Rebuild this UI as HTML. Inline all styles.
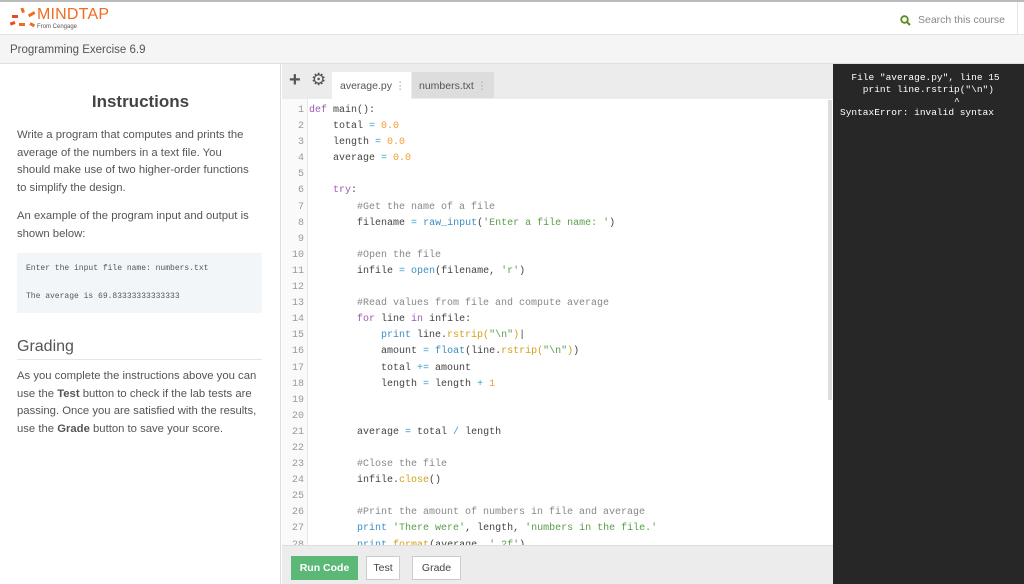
<!DOCTYPE html>
<html><head><meta charset="utf-8"><style>
*{margin:0;padding:0;box-sizing:border-box}
body{width:1024px;height:584px;overflow:hidden;font-family:"Liberation Sans",sans-serif;background:#fff;position:relative}
.top{position:absolute;left:0;top:0;width:1024px;height:35px;border-top:2px solid #bbb;border-bottom:1px solid #e4e4e4;background:#fff}
.crumb{position:absolute;left:0;top:35px;width:1024px;height:29px;background:#f5f5f5;border-bottom:1px solid #e0e0e0;font-size:11.5px;color:#555;padding:9px 0 0 10px}
.left{position:absolute;left:0;top:64px;width:281px;height:520px;background:#fff;border-right:1px solid #ddd;color:#555;font-size:11.3px;line-height:17.6px}
.ed{position:absolute;left:282px;top:64px;width:551px;height:520px;background:#fff;overflow:hidden}
.tabs{position:absolute;left:0;top:0;width:551px;height:35px;background:#ececec}
.gut{position:absolute;left:0;top:35px;width:26px;height:446px;background:#fafafa;border-right:1px solid #e8e8e8}
.code{position:absolute;left:0;top:39px;font-family:"Liberation Mono",monospace;font-size:10px;line-height:16.1px;color:#444;white-space:pre}
.ln{display:inline-block;width:22px;text-align:right;color:#999;margin-right:5px}
.k{color:#9b59b6}.p{color:#3c8dc5}.n{color:#f39c32}.s{color:#5a9e4a}.m{color:#d4a017}.c{color:#888}.o{color:#3aa0c8}
.bot{position:absolute;left:0;top:481px;width:551px;height:39px;background:#ececec;border-top:1px solid #ddd}
.btn{position:absolute;top:10px;height:24px;font-size:10.5px;line-height:22px;text-align:center;border:1px solid #ccc;background:#fff;color:#444}
.out{position:absolute;left:833px;top:64px;width:191px;height:520px;background:#272727;color:#fff;font-family:"Liberation Mono",monospace;font-size:9.5px;line-height:11.8px;white-space:pre;padding:8px 0 0 7px}
</style></head><body>
<div class="top">
<svg style="position:absolute;left:10px;top:6px" width="28" height="22" viewBox="0 0 28 22"><rect x="11" y="0" width="3" height="5" fill="#f26b22" transform="rotate(-20 12 2)"/><rect x="18" y="5" width="7" height="3" fill="#f26b22" transform="rotate(-30 21 6)"/><rect x="2" y="7" width="6" height="3" fill="#e84c1e"/><rect x="0" y="14" width="5" height="3" fill="#e84c1e" transform="rotate(-20 2 15)"/><rect x="9" y="15" width="6" height="3" fill="#f26b22"/><rect x="20" y="15" width="5" height="3" fill="#f26b22" transform="rotate(30 22 16)"/></svg>
<div style="position:absolute;left:37px;top:4px;font-size:16px;color:#f26b22;letter-spacing:0.2px">MINDTAP</div>
<div style="position:absolute;left:37px;top:22px;font-size:6px;color:#555">From Cengage</div>
<svg style="position:absolute;left:900px;top:13px" width="11" height="11" viewBox="0 0 11 11"><circle cx="4.5" cy="4.5" r="3.3" fill="none" stroke="#5c8a1e" stroke-width="1.8"/><line x1="7" y1="7" x2="10" y2="10" stroke="#5c8a1e" stroke-width="2"/></svg>
<div style="position:absolute;left:918px;top:12px;font-size:10.5px;color:#888">Search this course</div>
<div style="position:absolute;left:1017px;top:0;width:1px;height:33px;background:#e4e4e4"></div>
</div>
<div class="crumb">Programming Exercise 6.9</div>
<div class="left">
<div style="position:absolute;left:0;width:281px;top:29px;text-align:center;font-size:17px;font-weight:bold;color:#444">Instructions</div>
<div style="position:absolute;left:17px;top:63px;width:260px;white-space:nowrap">Write a program that computes and prints the<br>average of the numbers in a text file. You<br>should make use of two higher-order functions<br>to simplify the design.</div>
<div style="position:absolute;left:17px;top:144px;width:260px;white-space:nowrap">An example of the program input and output is<br>shown below:</div>
<div style="position:absolute;left:17px;top:189px;width:245px;height:60px;background:#f3f6f9;font-family:'Liberation Mono',monospace;font-size:8px;color:#555;line-height:28px;padding:2px 0 0 9px">Enter the input file name: numbers.txt<br>The average is 69.83333333333333</div>
<div style="position:absolute;left:17px;top:274px;width:245px;font-size:16px;color:#555;border-bottom:1px solid #e5e5e5;padding-bottom:3px">Grading</div>
<div style="position:absolute;left:17px;top:304px;width:260px;white-space:nowrap">As you complete the instructions above you can<br>use the <b>Test</b> button to check if the lab tests are<br>passing. Once you are satisfied with the results,<br>use the <b>Grade</b> button to save your score.</div>
</div>
<div class="ed">
<div class="tabs">
<div style="position:absolute;left:7px;top:5px;font-size:20px;font-weight:bold;color:#555">+</div>
<div style="position:absolute;left:29px;top:6px;font-size:17px;color:#555">⚙</div>
<div style="position:absolute;left:50px;top:8px;width:79px;height:27px;background:#fff;font-size:10.5px;color:#555;padding:8px 0 0 8px">average.py <span style="color:#aaa">⋮</span></div>
<div style="position:absolute;left:130px;top:8px;width:82px;height:26px;background:#ddd;font-size:10.5px;color:#555;padding:8px 0 0 7px">numbers.txt <span style="color:#aaa">⋮</span></div>
</div>
<div class="gut"></div>
<div style="position:absolute;left:546px;top:36px;width:4px;height:300px;background:#ddd"></div>
<div class="code"><span class="ln">1</span><span class="k">def</span> main():
<span class="ln">2</span>    total <span class="o">=</span> <span class="n">0.0</span>
<span class="ln">3</span>    length <span class="o">=</span> <span class="n">0.0</span>
<span class="ln">4</span>    average <span class="o">=</span> <span class="n">0.0</span>
<span class="ln">5</span>
<span class="ln">6</span>    <span class="k">try</span>:
<span class="ln">7</span>        <span class="c">#Get the name of a file</span>
<span class="ln">8</span>        filename <span class="o">=</span> <span class="p">raw_input</span>(<span class="s">'Enter a file name: '</span>)
<span class="ln">9</span>
<span class="ln">10</span>        <span class="c">#Open the file</span>
<span class="ln">11</span>        infile <span class="o">=</span> <span class="p">open</span>(filename, <span class="s">'r'</span>)
<span class="ln">12</span>
<span class="ln">13</span>        <span class="c">#Read values from file and compute average</span>
<span class="ln">14</span>        <span class="k">for</span> line <span class="k">in</span> infile:
<span class="ln">15</span>            <span class="p">print</span> line.<span class="m">rstrip(</span><span class="s">"\n"</span><span class="m">)</span>|
<span class="ln">16</span>            amount <span class="o">=</span> <span class="p">float</span>(line.<span class="m">rstrip(</span><span class="s">"\n"</span><span class="m">)</span>)
<span class="ln">17</span>            total <span class="o">+=</span> amount
<span class="ln">18</span>            length <span class="o">=</span> length <span class="o">+</span> <span class="n">1</span>
<span class="ln">19</span>
<span class="ln">20</span>
<span class="ln">21</span>        average <span class="o">=</span> total <span class="o">/</span> length
<span class="ln">22</span>
<span class="ln">23</span>        <span class="c">#Close the file</span>
<span class="ln">24</span>        infile.<span class="m">close</span>()
<span class="ln">25</span>
<span class="ln">26</span>        <span class="c">#Print the amount of numbers in file and average</span>
<span class="ln">27</span>        <span class="p">print</span> <span class="s">'There were'</span>, length, <span class="s">'numbers in the file.'</span>
<span class="ln">28</span>        <span class="p">print</span> <span class="m">format</span>(average, <span class="s">'.2f'</span>)
</div>
<div class="bot">
<div class="btn" style="left:9px;width:67px;background:#5cb876;border-color:#5cb876;color:#fff;font-weight:bold">Run Code</div>
<div class="btn" style="left:84px;width:34px">Test</div>
<div class="btn" style="left:130px;width:49px">Grade</div>
</div>
</div>
<div class="out">  File "average.py", line 15
    print line.rstrip("\n")
                    ^
SyntaxError: invalid syntax</div>
</body></html>
